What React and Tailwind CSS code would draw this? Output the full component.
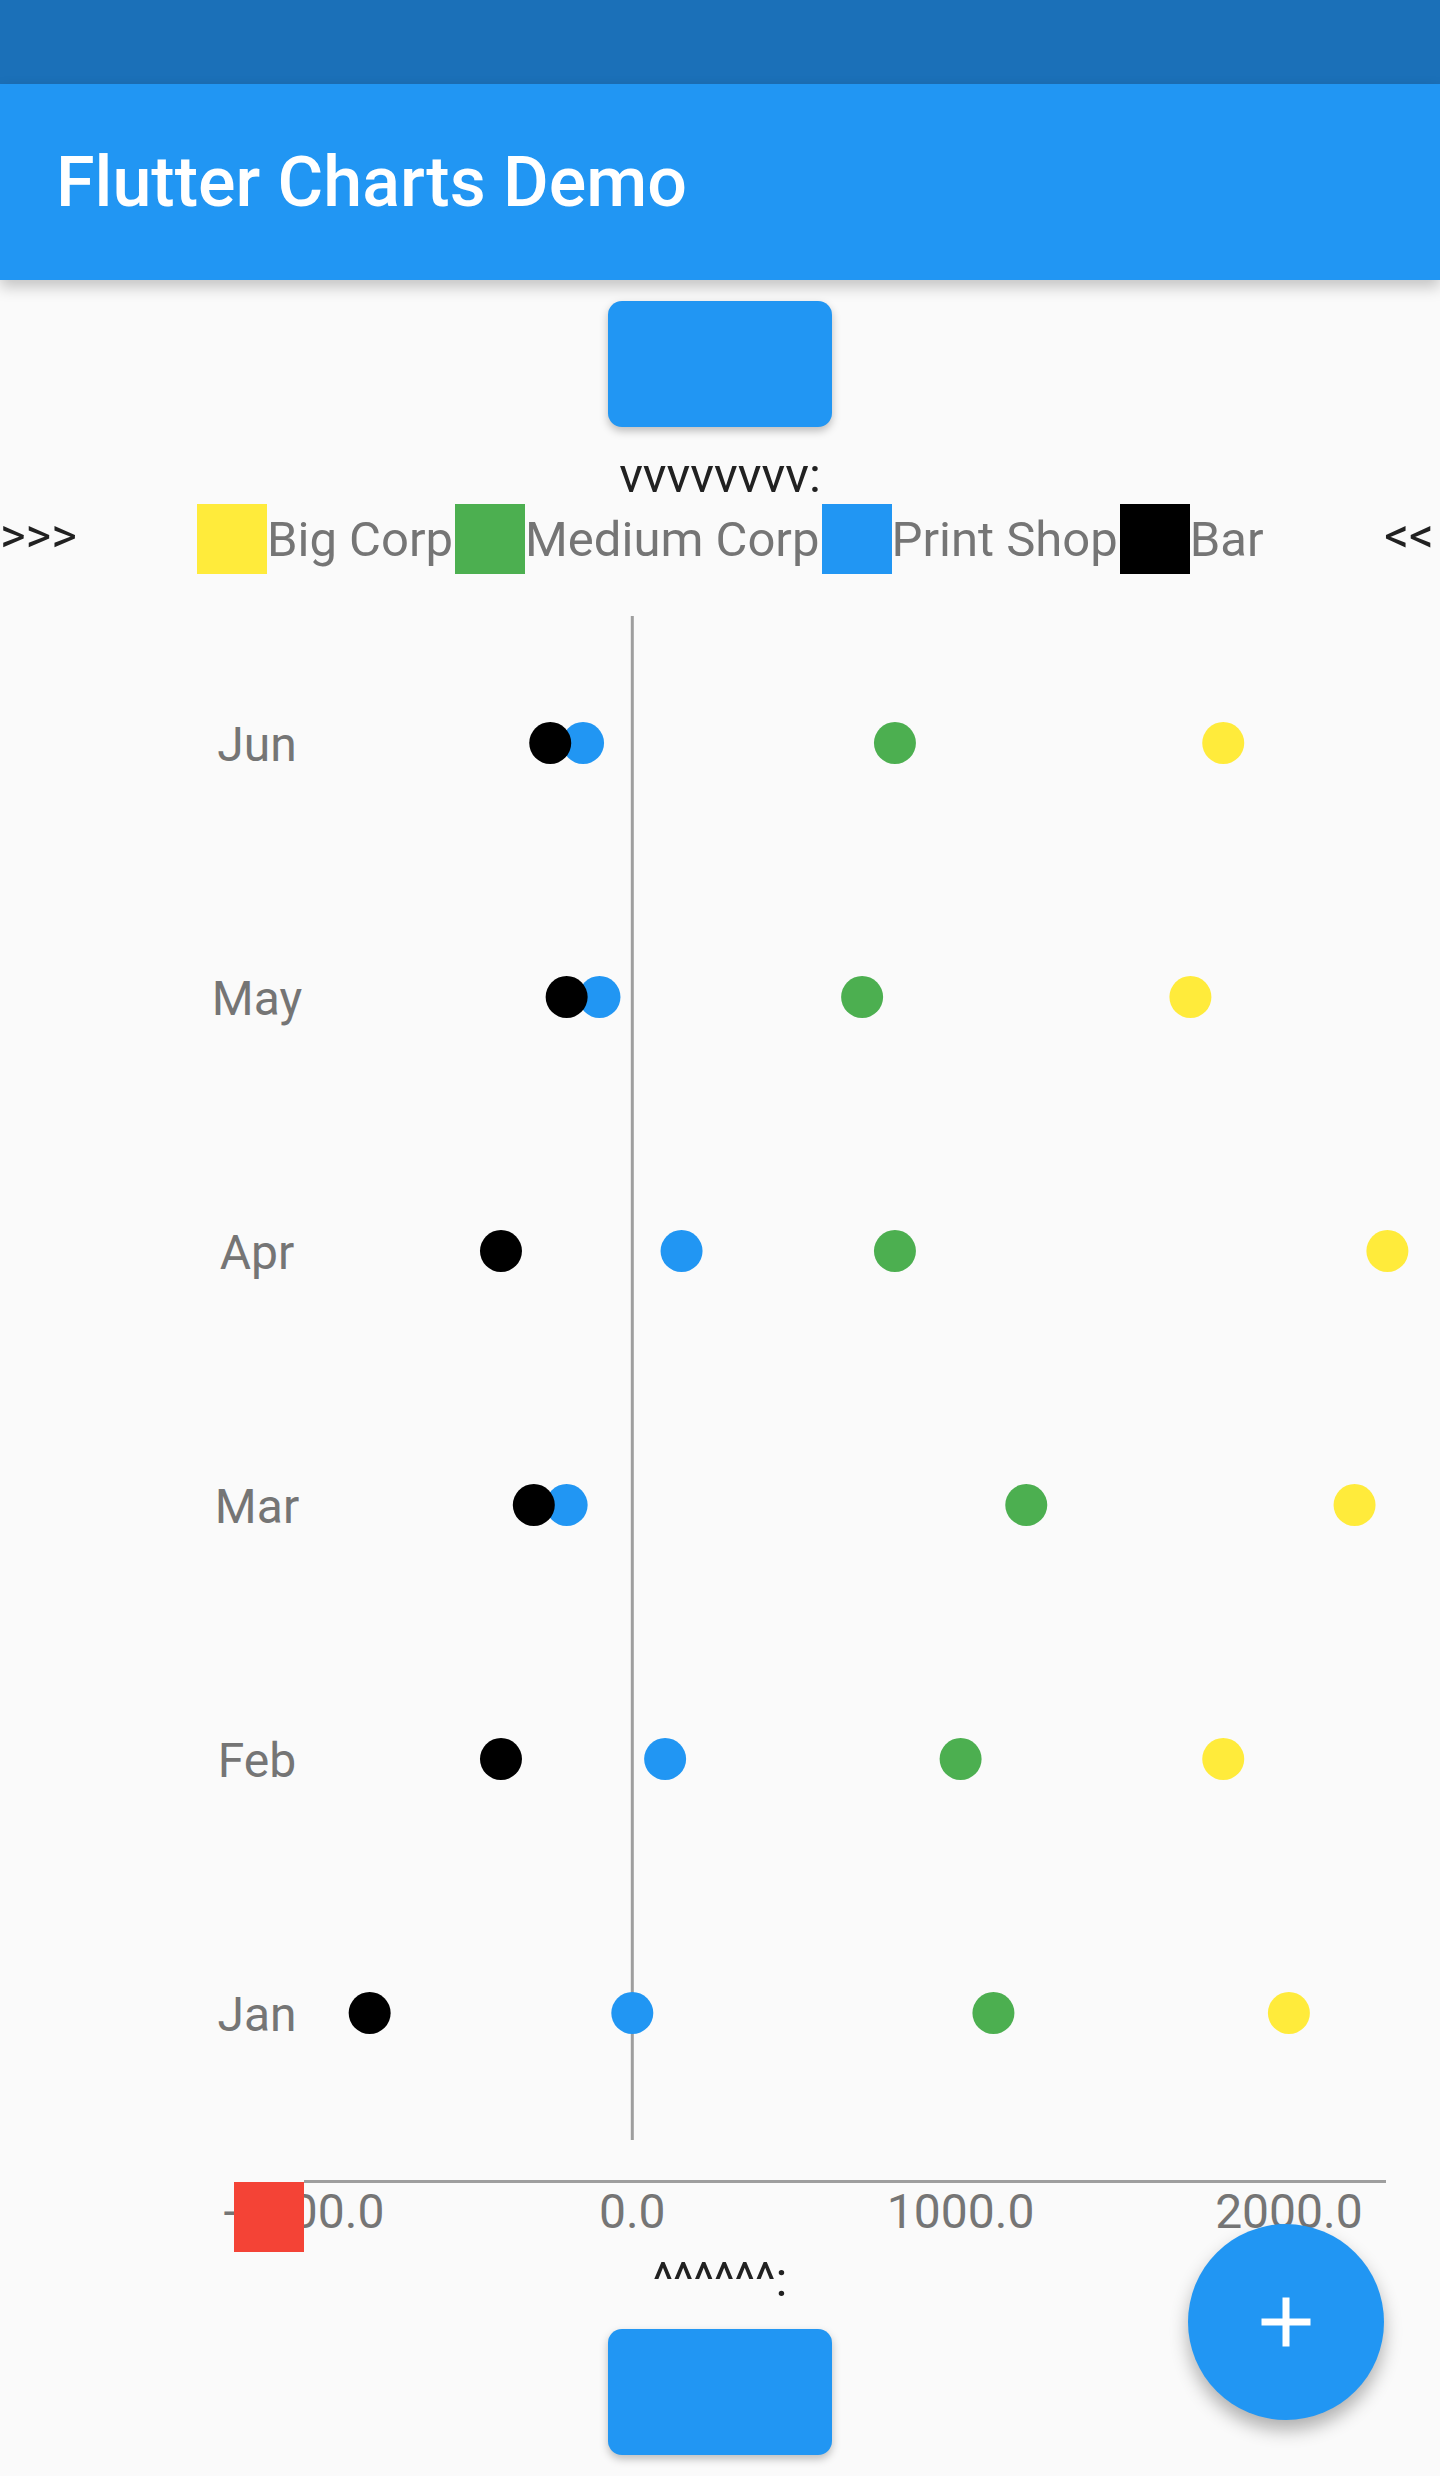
const SERIES = [
  { key: "big", color: "#ffeb3b" },
  { key: "medium", color: "#4caf50" },
  { key: "print", color: "#2196f3" },
  { key: "bar", color: "#000000" },
];

// values per month, in chart units
const ROWS = [
  { month: "Jun", big: 1800, medium: 800, print: -150, bar: -250 },
  { month: "May", big: 1700, medium: 700, print: -100, bar: -200 },
  { month: "Apr", big: 2300, medium: 800, print: 150, bar: -400 },
  { month: "Mar", big: 2200, medium: 1200, print: -200, bar: -300 },
  { month: "Feb", big: 1800, medium: 1000, print: 100, bar: -400 },
  { month: "Jan", big: 2000, medium: 1100, print: 0, bar: -800 },
];

const LEGEND = [
  { label: "Big Corp", color: "bg-[#ffeb3b]" },
  { label: "Medium Corp", color: "bg-[#4caf50]" },
  { label: "Print Shop", color: "bg-[#2196f3]" },
  { label: "Bar", color: "bg-black" },
];

const TICKS = [-1000, 0, 1000, 2000];

const ZERO_X = 632.3;
const SCALE = 0.3283;
const xOf = (v) => ZERO_X + v * SCALE;

function Chart() {
  return (
    <svg width="1440" height="1678" className="block" style={{ fontFamily: "Roboto, sans-serif" }}>
      <line x1={ZERO_X} y1="42" x2={ZERO_X} y2="1566" stroke="#9e9e9e" strokeWidth="3" />
      <line x1="304" y1="1607.5" x2="1386" y2="1607.5" stroke="#9e9e9e" strokeWidth="3" />
      {ROWS.map((row, i) => {
        const cy = 169 + i * 254;
        return (
          <g key={row.month}>
            <text x="257" y={cy + 18} textAnchor="middle" fontSize="48" fill="#757575">
              {row.month}
            </text>
            {SERIES.map((s) => (
              <circle key={s.key} cx={xOf(row[s.key])} cy={cy} r="21" fill={s.color} />
            ))}
          </g>
        );
      })}
      {TICKS.map((t) => (
        <text key={t} x={xOf(t)} y="1654" textAnchor="middle" fontSize="48" fill="#757575">
          {t.toFixed(1)}
        </text>
      ))}
      <rect x="234" y="1608" width="70" height="70" fill="#f44336" />
    </svg>
  );
}

export default function App() {
  return (
    <div className="relative h-[2476px] w-[1440px] overflow-hidden bg-[#fafafa] font-['Roboto',sans-serif]">
      <div className="h-[84px] bg-[#1b70b8]" />
      <header className="relative z-10 flex h-[196px] items-center bg-[#2196f3] pl-[56px] shadow-[0_7px_14px_rgba(0,0,0,0.22)]">
        <h1 className="text-[70px] font-medium leading-none text-white">Flutter Charts Demo</h1>
      </header>

      <div className="flex justify-center pt-[21px]">
        <button className="h-[126px] w-[224px] rounded-[14px] bg-[#2196f3] shadow-[0_4px_8px_rgba(0,0,0,0.25)]" />
      </div>

      <p className="mt-[21px] text-center text-[49px] leading-[56px] text-[#212121]">vvvvvvvv:</p>

      <div className="flex h-[70px] items-center">
        <span className="w-[197px] shrink-0 pb-[8px] text-[49px] leading-none text-[#212121]">&gt;&gt;&gt;</span>
        {LEGEND.map((item) => (
          <div key={item.label} className="flex items-center">
            <span className={`h-[70px] w-[70px] ${item.color}`} />
            <span className="mr-[2px] text-[49px] leading-none text-[#757575]">{item.label}</span>
          </div>
        ))}
        <span className="ml-auto pb-[8px] pr-[6px] text-[49px] leading-none text-[#212121]">&lt;&lt;</span>
      </div>

      <Chart />

      <p className="text-center text-[49px] leading-[56px] text-[#212121]">^^^^^^:</p>

      <div className="mt-[21px] flex justify-center">
        <button className="h-[126px] w-[224px] rounded-[14px] bg-[#2196f3] shadow-[0_4px_8px_rgba(0,0,0,0.25)]" />
      </div>

      <button className="absolute bottom-[56px] right-[56px] flex h-[196px] w-[196px] items-center justify-center rounded-full bg-[#2196f3] shadow-[0_10px_18px_rgba(0,0,0,0.3)]">
        <svg width="84" height="84" viewBox="0 0 24 24" fill="#ffffff">
          <path d="M19 13h-6v6h-2v-6H5v-2h6V5h2v6h6v2z" />
        </svg>
      </button>
    </div>
  );
}
